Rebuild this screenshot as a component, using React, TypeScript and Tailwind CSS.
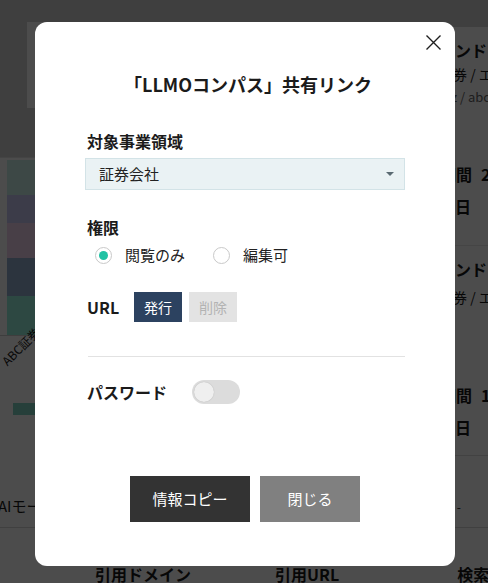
import { useState } from 'react';

const FONT = { fontFamily: '"Noto Sans CJK JP", "Noto Sans", sans-serif' };

function BackgroundPage() {
  return (
    <div className="h-[583px] w-[488px] overflow-hidden bg-[#d2d2d2] flex flex-col text-[#1a1a1a]">
      <div className="flex h-[456px] shrink-0">
        {/* left column */}
        <div className="w-[440px] shrink-0 flex flex-col">
          <div className="ml-[27px] mt-[22px] h-[86px] bg-white" />
          <div className="mt-[49px] flex-1 bg-white border-t border-[#e4e4e4] flex flex-col">
            <div className="ml-[7px] mt-[2px] h-[175px] flex flex-col">
              <div className="h-[35px] bg-[#cbf2ea]" />
              <div className="h-[28px] bg-[#c9c9f6]" />
              <div className="h-[35px] bg-[#f2d4ee]" />
              <div className="h-[38px] bg-[#93b0d0]" />
              <div className="h-[39px] bg-[#96f0dc]" />
            </div>
            <div className="h-px bg-[#cfcfcf]" />
            <div className="h-[60px] relative">
              <span className="absolute left-[4px] top-[18px] -rotate-45 text-[12px] origin-left whitespace-nowrap">ABC証券</span>
            </div>
            <div className="ml-[13px] mt-[7px] w-[60px] h-[12px] bg-[#7fd3c3]" />
          </div>
        </div>
        {/* right column */}
        <div className="w-[200px] shrink-0 flex flex-col whitespace-nowrap">
          <div className="mt-[27px] h-[198px] bg-white pt-[10px]">
            <div className="-ml-[17px] text-[16px] font-bold leading-[26px]">ブランド</div>
            <div className="-ml-[1px] text-[14px] leading-[22px]">証券 / エンタメ</div>
            <div className="-ml-[2px] text-[13px] leading-[24px] text-[#666]">xyz / abcd</div>
            <div className="mt-[52px] text-[16px] font-bold leading-[26px] flex">
              <span>期間</span>
              <span className="ml-[9px]">2025</span>
            </div>
            <div className="-ml-[17px] mt-[6px] text-[16px] font-bold leading-[26px]">開始日</div>
          </div>
          <div className="flex-1 bg-white border-b border-[#dcdcdc]">
            <div className="mt-[20px] border-t border-[#e6e6e6] pt-[10px]">
              <div className="-ml-[17px] text-[16px] font-bold leading-[26px]">トレンド</div>
              <div className="-ml-[1px] mt-[4px] text-[14px] leading-[22px]">証券 / エンタメ</div>
              <div className="mt-[74px] text-[16px] font-bold leading-[26px] flex">
                <span>期間</span>
                <span className="ml-[9px]">1</span>
              </div>
              <div className="-ml-[17px] mt-[6px] text-[16px] font-bold leading-[26px]">開始日</div>
            </div>
          </div>
        </div>
      </div>
      <div className="h-[72px] shrink-0 bg-white border-b border-[#d6d6d6] flex items-center">
        <span className="-ml-[2px] mt-[30px] text-[15px]">AIモード</span>
        <span className="ml-auto mr-[27px] mt-[30px] text-[12px]">-</span>
      </div>
      <div className="flex-1 bg-white flex pt-[34px] text-[16px] font-bold whitespace-nowrap leading-[24px]">
        <span className="ml-[95px] shrink-0">引用ドメイン</span>
        <span className="ml-[84px] shrink-0">引用URL</span>
        <span className="ml-[118px] shrink-0">検索</span>
      </div>
    </div>
  );
}

function Radio({ checked, label, onClick }: { checked: boolean; label: string; onClick: () => void }) {
  return (
    <button type="button" onClick={onClick} className="flex items-center">
      <span className="w-[17px] h-[17px] rounded-full border border-[#c9c9c9] bg-white flex items-center justify-center">
        {checked && <span className="w-[9px] h-[9px] rounded-full bg-[#21c2a4]" />}
      </span>
      <span className="ml-[13px] text-[15px] leading-[24px] text-[#222]">{label}</span>
    </button>
  );
}

export default function App() {
  const [perm, setPerm] = useState<'view' | 'edit'>('view');
  const [pw, setPw] = useState(false);

  return (
    <div className="relative w-[488px] h-[583px] overflow-hidden" style={FONT}>
      <BackgroundPage />

      <div className="absolute inset-0 bg-black/70 flex justify-center items-start">
        <div className="relative ml-[2px] mt-[22px] w-[420px] h-[544px] bg-white rounded-xl px-[50px] pt-[50px] flex flex-col text-[#1b1b1b]">
          <button type="button" className="absolute right-[13px] top-[12px] w-[17px] h-[17px] flex items-center justify-center">
            <svg width="17" height="17" viewBox="0 0 17 17" fill="none" stroke="#1f1f1f" strokeWidth="1.4">
              <path d="M1.5 1.5 L15.5 15.5 M15.5 1.5 L1.5 15.5" />
            </svg>
          </button>

          <h2 className="text-center text-[18px] font-bold leading-[24px] pl-[6px]">「LLMOコンパス」共有リンク</h2>

          <div className="mt-[33px] pl-[2px] text-[16px] font-bold leading-[24px]">対象事業領域</div>
          <div className="mt-[5px] h-[32px] border border-[#d3e3e7] bg-[#eaf2f4] flex items-center pl-[13px] pr-[10px]">
            <span className="text-[15px] text-[#222]">証券会社</span>
            <svg className="ml-auto" width="8" height="4" viewBox="0 0 8 4">
              <path d="M0 0 H8 L4 4 Z" fill="#5a6a72" />
            </svg>
          </div>

          <div className="mt-[25px] pl-[2px] text-[16px] font-bold leading-[24px]">権限</div>
          <div className="mt-[4px] h-[24px] pl-[10px] flex items-center gap-[28px]">
            <Radio checked={perm === 'view'} label="閲覧のみ" onClick={() => setPerm('view')} />
            <Radio checked={perm === 'edit'} label="編集可" onClick={() => setPerm('edit')} />
          </div>

          <div className="mt-[25px] h-[30px] flex items-center pl-[2px]">
            <span className="w-[47px] text-[16px] font-bold">URL</span>
            <button type="button" className="w-[48px] h-[30px] bg-[#2c4260] text-white text-[14px]">発行</button>
            <button type="button" className="ml-[7px] w-[48px] h-[30px] bg-[#e3e3e3] text-[#b3b3b3] text-[14px]">削除</button>
          </div>

          <div className="mt-[34px] ml-[3px] h-px bg-[#e2e2e2]" />

          <div className="mt-[23px] h-[24px] flex items-center pl-[2px] gap-[25px]">
            <span className="text-[16px] font-bold">パスワード</span>
            <button
              type="button"
              onClick={() => setPw(!pw)}
              className={`w-[48px] h-[24px] rounded-full flex items-center px-[2px] ${pw ? 'bg-[#21c2a4] justify-end' : 'bg-[#dcdcdc] justify-start'}`}
            >
              <span className="w-[20px] h-[20px] rounded-full bg-[#efefef] shadow-[0_0_1px_rgba(0,0,0,0.25)]" />
            </button>
          </div>

          <div className="mt-[72px] flex justify-center gap-[10px]">
            <button type="button" className="w-[120px] h-[46px] bg-[#333333] text-white text-[15px]">情報コピー</button>
            <button type="button" className="w-[100px] h-[46px] bg-[#808080] text-white text-[15px]">閉じる</button>
          </div>
        </div>
      </div>
    </div>
  );
}
